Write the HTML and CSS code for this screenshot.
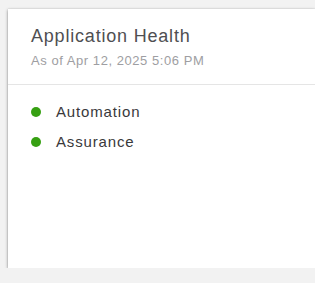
FILE: index.html
```html
<!DOCTYPE html>
<html lang="en">
<head>
  <meta charset="UTF-8">
  <meta name="viewport" content="width=device-width, initial-scale=1.0">
  <title>Application Health</title>
  <link rel="stylesheet" href="styles.css">
</head>
<body>
  <div class="card">
    <header class="card-header">
      <h2 class="card-title">Application Health</h2>
      <div class="card-subtitle">As of Apr 12, 2025 5:06 PM</div>
    </header>
    <ul class="health-list">
      <li class="health-item"><span class="status-dot"></span>Automation</li>
      <li class="health-item"><span class="status-dot"></span>Assurance</li>
    </ul>
  </div>
</body>
</html>
```

FILE: styles.css
```css
html, body {
  overflow: hidden;
}

body {
  font-family: "Liberation Sans", Arial, sans-serif;
  background-color: #f2f2f2;
  color: #39393b;
  margin: 0;
  padding: 9px 0 0 8px;
}

.card {
  width: 307px;
  height: 259px;
  background-color: #ffffff;
  box-shadow: 0 1px 3px rgba(0, 0, 0, 0.45), 0 0 1px rgba(0, 0, 0, 0.12);
}

.card-header {
  padding: 16px 23px 15px;
  border-bottom: 1px solid #e5e5e5;
}

.card-title {
  font-size: 18px;
  line-height: 22px;
  font-weight: 400;
  letter-spacing: 0.8px;
  color: #4f4f52;
  margin: 0 0 6px;
}

.card-subtitle {
  font-size: 13px;
  line-height: 16px;
  letter-spacing: 0.55px;
  color: #9e9ea2;
}

.health-list {
  list-style: none;
  margin: 0;
  padding: 17px 23px;
  display: flex;
  flex-direction: column;
  gap: 10px;
}

.health-item {
  display: flex;
  align-items: center;
  font-size: 15px;
  line-height: 20px;
  letter-spacing: 0.85px;
  color: #39393b;
}

.status-dot {
  width: 10px;
  height: 10px;
  border-radius: 50%;
  background-color: #36a012;
  margin-right: 15px;
}
```
